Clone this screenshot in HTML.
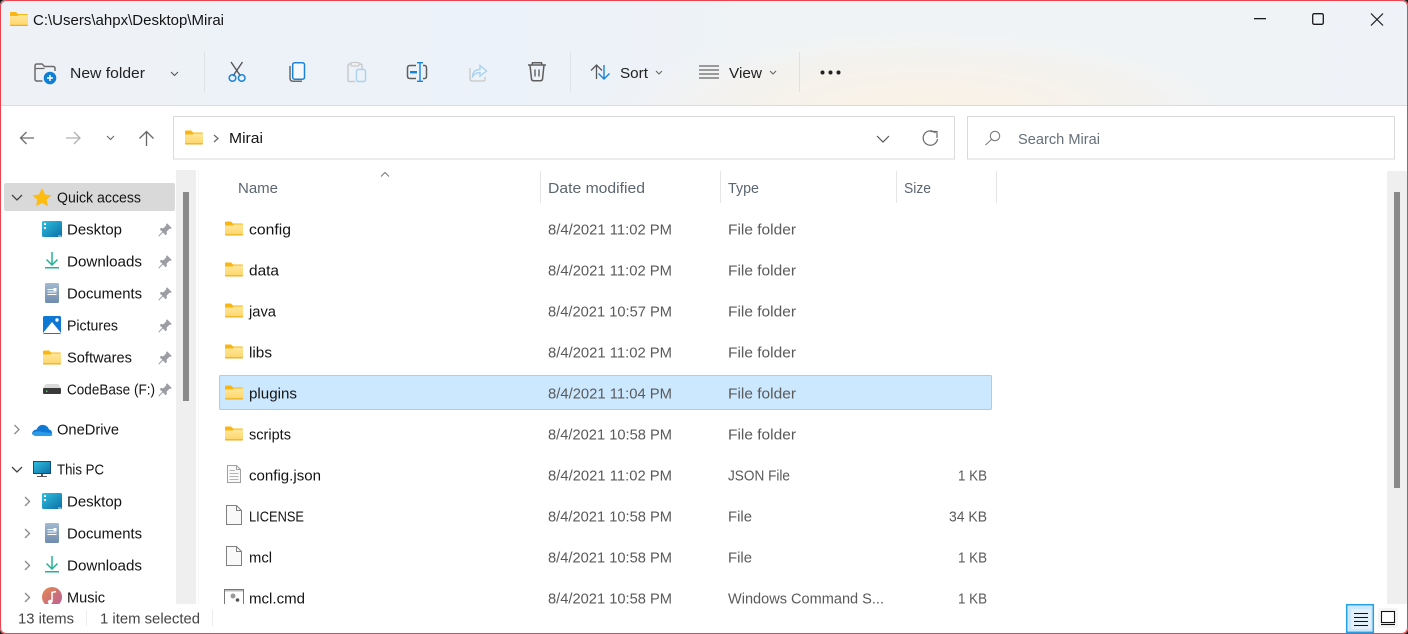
<!DOCTYPE html>
<html><head><meta charset="utf-8"><title>Mirai</title>
<style>
html,body{margin:0;padding:0;background:#fff;width:1408px;height:634px;overflow:hidden}
svg{display:block;position:absolute;left:0;top:0}
text{font-family:"Liberation Sans",sans-serif;font-size:14.5px;fill:#141414}
.g{fill:#5a5a5a}
.h{fill:#5c6670}
.s{fill:#66707a}
.st{fill:#454545}
.b{fill:#222}
</style></head><body>
<svg width="1408" height="634" viewBox="0 0 1408 634" xmlns="http://www.w3.org/2000/svg">
<defs>
<linearGradient id="bar" x1="0" y1="0" x2="1" y2="0">
<stop offset="0" stop-color="#eef2f6"/><stop offset=".36" stop-color="#ecf2f9"/><stop offset=".6" stop-color="#f0f3f5"/><stop offset="1" stop-color="#eff3f7"/>
</linearGradient>
<radialGradient id="warm" gradientUnits="userSpaceOnUse" cx="0" cy="0" r="1" gradientTransform="translate(930 110) scale(340 85)">
<stop offset="0" stop-color="#fbf1e5"/><stop offset=".6" stop-color="#f6f2ea" stop-opacity=".7"/><stop offset="1" stop-color="#f2f3f3" stop-opacity="0"/>
</radialGradient>
<linearGradient id="fo" x1="0" y1="0" x2="0" y2="1"><stop offset="0" stop-color="#ffe79b"/><stop offset="1" stop-color="#fdd568"/></linearGradient>
<linearGradient id="desk" x1="0" y1="0" x2="1" y2="1"><stop offset="0" stop-color="#2ec0df"/><stop offset="1" stop-color="#0c6fa6"/></linearGradient>
<linearGradient id="doc" x1="0" y1="0" x2="0" y2="1"><stop offset="0" stop-color="#a4b9d1"/><stop offset="1" stop-color="#6e8cad"/></linearGradient>
<linearGradient id="mus" x1="0" y1="0" x2="1" y2="1"><stop offset="0" stop-color="#e58a4c"/><stop offset="1" stop-color="#b85c9c"/></linearGradient>
<g id="folder">
<path d="M0 1.500Q0 .5 1 .5H6L8 2.500H17Q18 2.500 18 3.500V6H0Z" fill="#f9b612"/>
<path d="M0 4.500H7.500L9 3.500H18V13.500Q18 14.500 17 14.500H1Q0 14.500 0 13.500Z" fill="url(#fo)"/>
<path d="M0 13.300H18V13.500Q18 14.500 17 14.500H1Q0 14.500 0 13.500Z" fill="#edae1e"/>
</g>
<g id="pin"><path d="M9 0.300L13.700 5L12.700 6L11.600 5.600L8.700 8.500L8.900 11L7.700 12.200L5 9.500L1 13.500L.3 12.800L4.300 8.800L1.700 6.200L2.900 5L5.400 5.200L8.300 2.300L8 1.300Z" fill="#9a9ea3"/></g>
<g id="desktop"><rect x="0" y="0" width="20" height="16" rx="1.500" fill="url(#desk)"/><rect x="2" y="2" width="2" height="2" fill="#fff"/><rect x="2" y="6" width="2" height="2" fill="#fff"/><rect x="16" y="14.500" width="3" height="1" fill="#bfe6f2"/></g>
<g id="dl"><path d="M7 0V12.500M1.500 7.500L7 13L12.500 7.500" fill="none" stroke="#22b394" stroke-width="1.500"/><rect x="0" y="15" width="14" height="1.500" fill="#22b394"/></g>
<g id="docu"><rect width="14" height="20" rx="1.500" fill="url(#doc)"/><rect x="2.500" y="6" width="6" height="1" fill="#fff"/><rect x="2.500" y="8.500" width="9" height="1" fill="#fff"/><rect x="2.500" y="11" width="9" height="1" fill="#fff"/><rect x="8.500" y="5" width="3" height="3" fill="#fff"/></g>
<g id="chevR"><path d="M0 0L4.500 4.500L0 9" fill="none" stroke="#8a8a8a" stroke-width="1.300"/></g>
<g id="chevD"><path d="M0 0L5 5L10 0" fill="none" stroke="#444" stroke-width="1.300"/></g>
<g id="file"><path d="M.5.5H10.500L15.500 5.500V19.500H.5Z" fill="#f9f9f9" stroke="#7f7f7f"/><path d="M10.500.5V5.500H15.500" fill="none" stroke="#7f7f7f"/></g>
<clipPath id="listclip"><rect x="196" y="165" width="1190" height="439"/></clipPath>
<clipPath id="sideclip"><rect x="0" y="165" width="176" height="439"/></clipPath>
</defs>

<!-- toolbar -->
<rect x="0" y="0" width="1408" height="105" fill="url(#bar)"/>
<rect x="500" y="0" width="860" height="105" fill="url(#warm)"/>
<rect x="0" y="105" width="1408" height="1" fill="#dcdcdc"/>

<!-- title -->
<use href="#folder" x="10" y="11.500"/>
<text x="33" y="25" textLength="191" lengthAdjust="spacingAndGlyphs">C:\Users\ahpx\Desktop\Mirai</text>

<!-- window buttons -->
<rect x="1254" y="18" width="12" height="1.300" fill="#1a1a1a"/>
<rect x="1312.700" y="13.700" width="10.600" height="10.600" rx="1.500" fill="none" stroke="#1a1a1a" stroke-width="1.300"/>
<path d="M1371 13.500L1383 25.500M1383 13.500L1371 25.500" stroke="#1a1a1a" stroke-width="1.200" fill="none"/>

<!-- new folder -->
<path d="M42.500 81H37Q35 81 35 79V66Q35 64 37 64H42L44.500 66.500H53Q55 66.500 55 68.500V71" fill="none" stroke="#6b6b6b" stroke-width="1.500"/>
<path d="M35 68.500H44.500" stroke="#6b6b6b" stroke-width="1.300"/>
<circle cx="50" cy="78" r="6.300" fill="#0f7fd6"/>
<path d="M50 75V81M47 78H53" stroke="#fff" stroke-width="1.500"/>
<text class="b" x="70" y="78" textLength="75" lengthAdjust="spacingAndGlyphs">New folder</text>
<path d="M171 72L174.500 75.500L178 72" fill="none" stroke="#555" stroke-width="1.100"/>
<rect x="204" y="52" width="1" height="40" fill="#dfe2e5"/>

<!-- cut -->
<path d="M231 62L240.500 76M242.500 62L233 76" stroke="#555" stroke-width="1.400" fill="none"/>
<circle cx="232.500" cy="78" r="3.300" fill="none" stroke="#1a83d8" stroke-width="1.500"/>
<circle cx="241.700" cy="78" r="3.300" fill="none" stroke="#1a83d8" stroke-width="1.500"/>
<!-- copy -->
<path d="M290 66V78Q290 81.300 293 81.300H302" fill="none" stroke="#6a6a6a" stroke-width="1.500"/>
<rect x="292.700" y="62.700" width="11.800" height="16.500" rx="2" fill="#f6f9fc" stroke="#1a83d8" stroke-width="1.500"/>
<!-- paste -->
<path d="M351 64H349.500Q348 64 348 65.500V80Q348 81.500 349.500 81.500H355M362 69V65.500Q362 64 360.500 64H359" fill="none" stroke="#c9c9c9" stroke-width="1.500"/>
<rect x="351" y="62.500" width="8" height="3.500" rx="1" fill="#eef2f6" stroke="#c9c9c9" stroke-width="1.200"/>
<rect x="356.500" y="69.500" width="9" height="12" rx="1.500" fill="none" stroke="#a8d2f0" stroke-width="1.400"/>
<!-- rename -->
<path d="M416 65.500H410Q407.500 65.500 407.500 68V76Q407.500 78.500 410 78.500H416M423 65.500H424.500Q426.500 65.500 426.500 68V76Q426.500 78.500 424.500 78.500H423" fill="none" stroke="#5e5e5e" stroke-width="1.500"/>
<path d="M420 63V81M417 62.700H423M417 81.300H423" stroke="#1a83d8" stroke-width="1.400" fill="none"/>
<rect x="410" y="71" width="7" height="2.400" fill="#1a83d8"/>
<!-- share -->
<path d="M470 68V79Q470 81 472 81H483Q485 81 485 79V77" fill="none" stroke="#cdcdcd" stroke-width="1.500"/>
<path d="M472.500 76.500Q473 69.500 480 69.500V65.500L486.500 71L480 76V72.500Q475.500 72.500 472.500 76.500Z" fill="#eef6fc" stroke="#a8d2f0" stroke-width="1.400"/>
<!-- delete -->
<path d="M528 65H546M532 65L532.500 62.700H541.500L542 65M530 65L531.500 79Q531.700 80.700 533.500 80.700H540.500Q542.300 80.700 542.500 79L544 65" fill="none" stroke="#5e5e5e" stroke-width="1.500"/>
<path d="M535 69.500V76.500M539 69.500V76.500" stroke="#5e5e5e" stroke-width="1.400"/>
<rect x="570" y="52" width="1" height="40" fill="#dfe2e5"/>
<!-- sort -->
<path d="M596.500 79V65M591 70.500L596.500 65L602 70.500" fill="none" stroke="#555" stroke-width="1.300"/>
<path d="M604 65V79M598.500 73.500L604 79L609.500 73.500" fill="none" stroke="#1a83d8" stroke-width="1.400"/>
<text class="b" x="620" y="78" textLength="28" lengthAdjust="spacingAndGlyphs">Sort</text>
<path d="M656 71L659 74L662 71" fill="none" stroke="#666" stroke-width="1.100"/>
<!-- view -->
<path d="M699 66H719M699 70H719M699 74H719M699 78H719" stroke="#666" stroke-width="1.300"/>
<text class="b" x="729" y="78" textLength="33" lengthAdjust="spacingAndGlyphs">View</text>
<path d="M770 71L773 74L776 71" fill="none" stroke="#666" stroke-width="1.100"/>
<rect x="799" y="52" width="1" height="40" fill="#dfe2e5"/>
<circle cx="822.500" cy="72.500" r="2" fill="#222"/><circle cx="830.500" cy="72.500" r="2" fill="#222"/><circle cx="838.500" cy="72.500" r="2" fill="#222"/>

<!-- nav -->
<path d="M34 138H20.500M26.500 132L20.500 138L26.500 144" fill="none" stroke="#6c6c6c" stroke-width="1.300"/>
<path d="M66 138H80M74 132L80 138L74 144" fill="none" stroke="#b0b0b0" stroke-width="1.300"/>
<path d="M107 136L110.500 139.500L114 136" fill="none" stroke="#666" stroke-width="1.100"/>
<path d="M146.500 146V131.500M139.500 138.500L146.500 131.500L153.500 138.500" fill="none" stroke="#666" stroke-width="1.300"/>

<rect x="173.500" y="116.500" width="781" height="42.500" fill="#fff" stroke="#d9d9d9"/>
<use href="#folder" x="185" y="130"/>
<path d="M214 135L218 138.500L214 142" fill="none" stroke="#666" stroke-width="1.200"/>
<text x="229" y="143" textLength="34" lengthAdjust="spacingAndGlyphs">Mirai</text>
<path d="M877 136L883 142L889 136" fill="none" stroke="#555" stroke-width="1.200"/>
<path d="M935.500 133A7.200 7.200 0 1 0 937.500 139" fill="none" stroke="#6a6a6a" stroke-width="1.200"/><path d="M930.500 131.500H937V138" fill="none" stroke="#6a6a6a" stroke-width="1.200"/>

<rect x="967.500" y="116.500" width="427" height="42.500" fill="#fff" stroke="#d9d9d9"/>
<circle cx="995" cy="136" r="4.700" fill="none" stroke="#7d7d7d" stroke-width="1.100"/>
<path d="M991.500 139.500L985.500 145" stroke="#7d7d7d" stroke-width="1.100"/>
<text class="s" x="1018" y="144" textLength="82" lengthAdjust="spacingAndGlyphs">Search Mirai</text>

<!-- sidebar -->
<rect x="176" y="170" width="20" height="434" fill="#efefef"/>
<rect x="183" y="192" width="6" height="209" fill="#8a8a8a"/>
<rect x="198" y="170" width="1" height="434" fill="#f6f6f6"/>
<rect x="4" y="183" width="171" height="28" rx="2" fill="#d9d9d9"/>
<g clip-path="url(#sideclip)">
<use href="#chevD" x="12" y="195"/>
<path d="M42 188L45 194.500L51.500 195.300L46.700 199.800L48 206.300L42 203L36 206.300L37.300 199.800L32.500 195.300L39 194.500Z" fill="#fdbd10"/>
<text x="57" y="202.500" textLength="84" lengthAdjust="spacingAndGlyphs">Quick access</text>

<use href="#desktop" x="42" y="221"/><text x="67" y="234.500" textLength="55" lengthAdjust="spacingAndGlyphs">Desktop</text><use href="#pin" x="158" y="223"/>
<use href="#dl" x="45" y="252"/><text x="67" y="266.500" textLength="75" lengthAdjust="spacingAndGlyphs">Downloads</text><use href="#pin" x="158" y="255"/>
<use href="#docu" x="45" y="283"/><text x="67" y="298.500" textLength="75" lengthAdjust="spacingAndGlyphs">Documents</text><use href="#pin" x="158" y="287"/>
<rect x="43" y="316" width="18" height="18" rx="1.500" fill="#0f78d4"/><path d="M43 333L52 322L61 333Z" fill="#fff"/><circle cx="57" cy="320" r="1.700" fill="#fff"/>
<text x="67" y="330.500" textLength="51" lengthAdjust="spacingAndGlyphs">Pictures</text><use href="#pin" x="158" y="319"/>
<use href="#folder" x="43" y="350"/><text x="67" y="362.500" textLength="65" lengthAdjust="spacingAndGlyphs">Softwares</text><use href="#pin" x="158" y="351"/>
<path d="M46 384H58L61 388H43Z" fill="#d9dad9"/><rect x="43" y="388" width="18" height="6" rx="1" fill="#3a3a3a"/><rect x="46" y="390.500" width="1.500" height="1.500" fill="#3fd14f"/>
<text x="67" y="394.500" textLength="88" lengthAdjust="spacingAndGlyphs">CodeBase (F:)</text><use href="#pin" x="158" y="383"/>

<use href="#chevR" x="14.500" y="425"/>
<path d="M32 434.500Q32 430 36.500 429.500Q39 424 44 425Q48 426 49 429.500Q52.500 430 52 434.500Z" fill="#0f78d4"/><path d="M32.500 433Q38 430 42 432L52 433Q53 436 50 436H36Q33 436 32.500 433Z" fill="#2a9ce8"/>
<text x="57" y="434.500" textLength="62" lengthAdjust="spacingAndGlyphs">OneDrive</text>

<use href="#chevD" x="12" y="467"/>
<rect x="33.500" y="461.500" width="17" height="12" fill="url(#desk)" stroke="#0a4f78" stroke-width="1"/><rect x="41" y="474" width="2" height="2" fill="#555"/><rect x="37" y="476" width="10" height="1" fill="#555"/>
<text x="57" y="474.500" textLength="47" lengthAdjust="spacingAndGlyphs">This PC</text>

<use href="#chevR" x="25" y="497"/><use href="#desktop" x="42" y="493"/><text x="67" y="506.500" textLength="55" lengthAdjust="spacingAndGlyphs">Desktop</text>
<use href="#chevR" x="25" y="529"/><use href="#docu" x="45" y="523"/><text x="67" y="538.500" textLength="75" lengthAdjust="spacingAndGlyphs">Documents</text>
<use href="#chevR" x="25" y="561"/><use href="#dl" x="45" y="556"/><text x="67" y="570.500" textLength="75" lengthAdjust="spacingAndGlyphs">Downloads</text>
<use href="#chevR" x="25" y="593"/><circle cx="52" cy="597" r="10" fill="url(#mus)"/><path d="M52 602V592.500L56 591.500" fill="none" stroke="#fff" stroke-width="1.500"/><circle cx="50" cy="602" r="2.200" fill="#fff"/>
<text x="67" y="602.500" textLength="38" lengthAdjust="spacingAndGlyphs">Music</text>
</g>

<!-- header -->
<path d="M381 176.500L385 172.500L389 176.500" fill="none" stroke="#777" stroke-width="1"/>
<text class="h" x="238" y="193" textLength="40" lengthAdjust="spacingAndGlyphs">Name</text>
<rect x="540" y="171" width="1" height="32" fill="#e5e5e5"/>
<text class="h" x="548" y="193" textLength="97" lengthAdjust="spacingAndGlyphs">Date modified</text>
<rect x="720" y="171" width="1" height="32" fill="#e5e5e5"/>
<text class="h" x="728" y="193" textLength="31" lengthAdjust="spacingAndGlyphs">Type</text>
<rect x="896" y="171" width="1" height="32" fill="#e5e5e5"/>
<text class="h" x="904" y="193" textLength="27" lengthAdjust="spacingAndGlyphs">Size</text>
<rect x="996" y="171" width="1" height="32" fill="#e5e5e5"/>

<!-- selected row -->
<rect x="219.500" y="375.500" width="772" height="34" rx="1" fill="#cce8ff" stroke="#99d1ff"/>

<!-- rows -->
<g clip-path="url(#listclip)">
<use href="#folder" x="225" y="221"/><text x="249" y="234.500" textLength="42" lengthAdjust="spacingAndGlyphs">config</text>
<text class="g" x="548" y="234.500" textLength="124" lengthAdjust="spacingAndGlyphs">8/4/2021 11:02 PM</text><text class="g" x="728" y="234.500" textLength="68" lengthAdjust="spacingAndGlyphs">File folder</text>

<use href="#folder" x="225" y="262"/><text x="249" y="275.500" textLength="30" lengthAdjust="spacingAndGlyphs">data</text>
<text class="g" x="548" y="275.500" textLength="124" lengthAdjust="spacingAndGlyphs">8/4/2021 11:02 PM</text><text class="g" x="728" y="275.500" textLength="68" lengthAdjust="spacingAndGlyphs">File folder</text>

<use href="#folder" x="225" y="303"/><text x="249" y="316.500" textLength="27" lengthAdjust="spacingAndGlyphs">java</text>
<text class="g" x="548" y="316.500" textLength="124" lengthAdjust="spacingAndGlyphs">8/4/2021 10:57 PM</text><text class="g" x="728" y="316.500" textLength="68" lengthAdjust="spacingAndGlyphs">File folder</text>

<use href="#folder" x="225" y="344"/><text x="249" y="357.500" textLength="23" lengthAdjust="spacingAndGlyphs">libs</text>
<text class="g" x="548" y="357.500" textLength="124" lengthAdjust="spacingAndGlyphs">8/4/2021 11:02 PM</text><text class="g" x="728" y="357.500" textLength="68" lengthAdjust="spacingAndGlyphs">File folder</text>

<use href="#folder" x="225" y="385"/><text x="249" y="398.500" textLength="48" lengthAdjust="spacingAndGlyphs">plugins</text>
<text class="g" x="548" y="398.500" textLength="124" lengthAdjust="spacingAndGlyphs">8/4/2021 11:04 PM</text><text class="g" x="728" y="398.500" textLength="68" lengthAdjust="spacingAndGlyphs">File folder</text>

<use href="#folder" x="225" y="426"/><text x="249" y="439.500" textLength="42" lengthAdjust="spacingAndGlyphs">scripts</text>
<text class="g" x="548" y="439.500" textLength="124" lengthAdjust="spacingAndGlyphs">8/4/2021 10:58 PM</text><text class="g" x="728" y="439.500" textLength="68" lengthAdjust="spacingAndGlyphs">File folder</text>

<path d="M227.500 465.500H236.500L240.500 469.500V482.500H227.500Z" fill="#fafafa" stroke="#a0a0a0"/><path d="M236.500 465.500V469.500H240.500" fill="none" stroke="#a0a0a0"/><path d="M229.500 470.500H235M229.500 473.500H238.500M229.500 476.500H238.500M229.500 479.500H238.500" stroke="#b5b5b5"/>
<text x="249" y="480.500" textLength="72" lengthAdjust="spacingAndGlyphs">config.json</text>
<text class="g" x="548" y="480.500" textLength="124" lengthAdjust="spacingAndGlyphs">8/4/2021 11:02 PM</text><text class="g" x="728" y="480.500" textLength="62" lengthAdjust="spacingAndGlyphs">JSON File</text><text class="g" x="958" y="480.500" textLength="29" lengthAdjust="spacingAndGlyphs">1 KB</text>

<use href="#file" x="226" y="505"/><text x="249" y="521.500" textLength="55" lengthAdjust="spacingAndGlyphs">LICENSE</text>
<text class="g" x="548" y="521.500" textLength="124" lengthAdjust="spacingAndGlyphs">8/4/2021 10:58 PM</text><text class="g" x="728" y="521.500" textLength="24" lengthAdjust="spacingAndGlyphs">File</text><text class="g" x="949" y="521.500" textLength="38" lengthAdjust="spacingAndGlyphs">34 KB</text>

<use href="#file" x="226" y="546"/><text x="249" y="562.500" textLength="23" lengthAdjust="spacingAndGlyphs">mcl</text>
<text class="g" x="548" y="562.500" textLength="124" lengthAdjust="spacingAndGlyphs">8/4/2021 10:58 PM</text><text class="g" x="728" y="562.500" textLength="24" lengthAdjust="spacingAndGlyphs">File</text><text class="g" x="958" y="562.500" textLength="29" lengthAdjust="spacingAndGlyphs">1 KB</text>

<rect x="224.500" y="589.500" width="19" height="20" fill="#fff" stroke="#777"/><rect x="225" y="590" width="18" height="1.500" fill="#bbb"/><circle cx="233" cy="596" r="2.500" fill="#9a9a9a"/><circle cx="237.500" cy="600" r="1.800" fill="#555"/>
<text x="249" y="603.500" textLength="56" lengthAdjust="spacingAndGlyphs">mcl.cmd</text>
<text class="g" x="548" y="603.500" textLength="124" lengthAdjust="spacingAndGlyphs">8/4/2021 10:58 PM</text><text class="g" x="728" y="603.500" textLength="156" lengthAdjust="spacingAndGlyphs">Windows Command S...</text><text class="g" x="958" y="603.500" textLength="29" lengthAdjust="spacingAndGlyphs">1 KB</text>
</g>

<!-- right scrollbar -->
<rect x="1387" y="171" width="20" height="433" fill="#efefef"/>
<rect x="1394" y="192" width="6" height="296" fill="#8a8a8a"/>

<!-- status -->
<text class="st" x="18" y="623.500" textLength="56" lengthAdjust="spacingAndGlyphs">13 items</text>
<rect x="86" y="610" width="1" height="16" fill="#ececec"/>
<text class="st" x="100" y="623.500" textLength="100" lengthAdjust="spacingAndGlyphs">1 item selected</text>
<rect x="212" y="610" width="1" height="16" fill="#ececec"/>

<rect x="1346.700" y="604.700" width="26.600" height="27.600" fill="#cce8ff" stroke="#26a0e4" stroke-width="1.500"/>
<rect x="1351" y="609" width="20" height="20" rx="2" fill="#e3f0f9"/>
<path d="M1354 613.500H1368M1354 617.500H1368M1354 621.500H1368M1354 625.500H1368" stroke="#111" stroke-width="1.100"/>
<rect x="1378" y="608" width="20" height="20" rx="2" fill="#f5f5f5"/>
<rect x="1381.500" y="611.500" width="13" height="11" fill="#fff" stroke="#111" stroke-width="1.100"/>
<path d="M1381 624.500H1395" stroke="#111" stroke-width="1.100"/>

<!-- window border -->
<path d="M0 6Q0 0 6 0H0ZM1408 6Q1408 0 1402 0H1408ZM0 628Q0 634 6 634H0ZM1408 628Q1408 634 1402 634H1408Z" fill="#1a1a1a"/>
<path d="M.5 7Q.5 .5 7 .5H1401Q1407.500 .5 1407.500 7V627Q1407.500 633.500 1401 633.500H7Q.5 633.500 .5 627Z" fill="none" stroke="#e8434f" stroke-width="1"/>
</svg>
</body></html>
